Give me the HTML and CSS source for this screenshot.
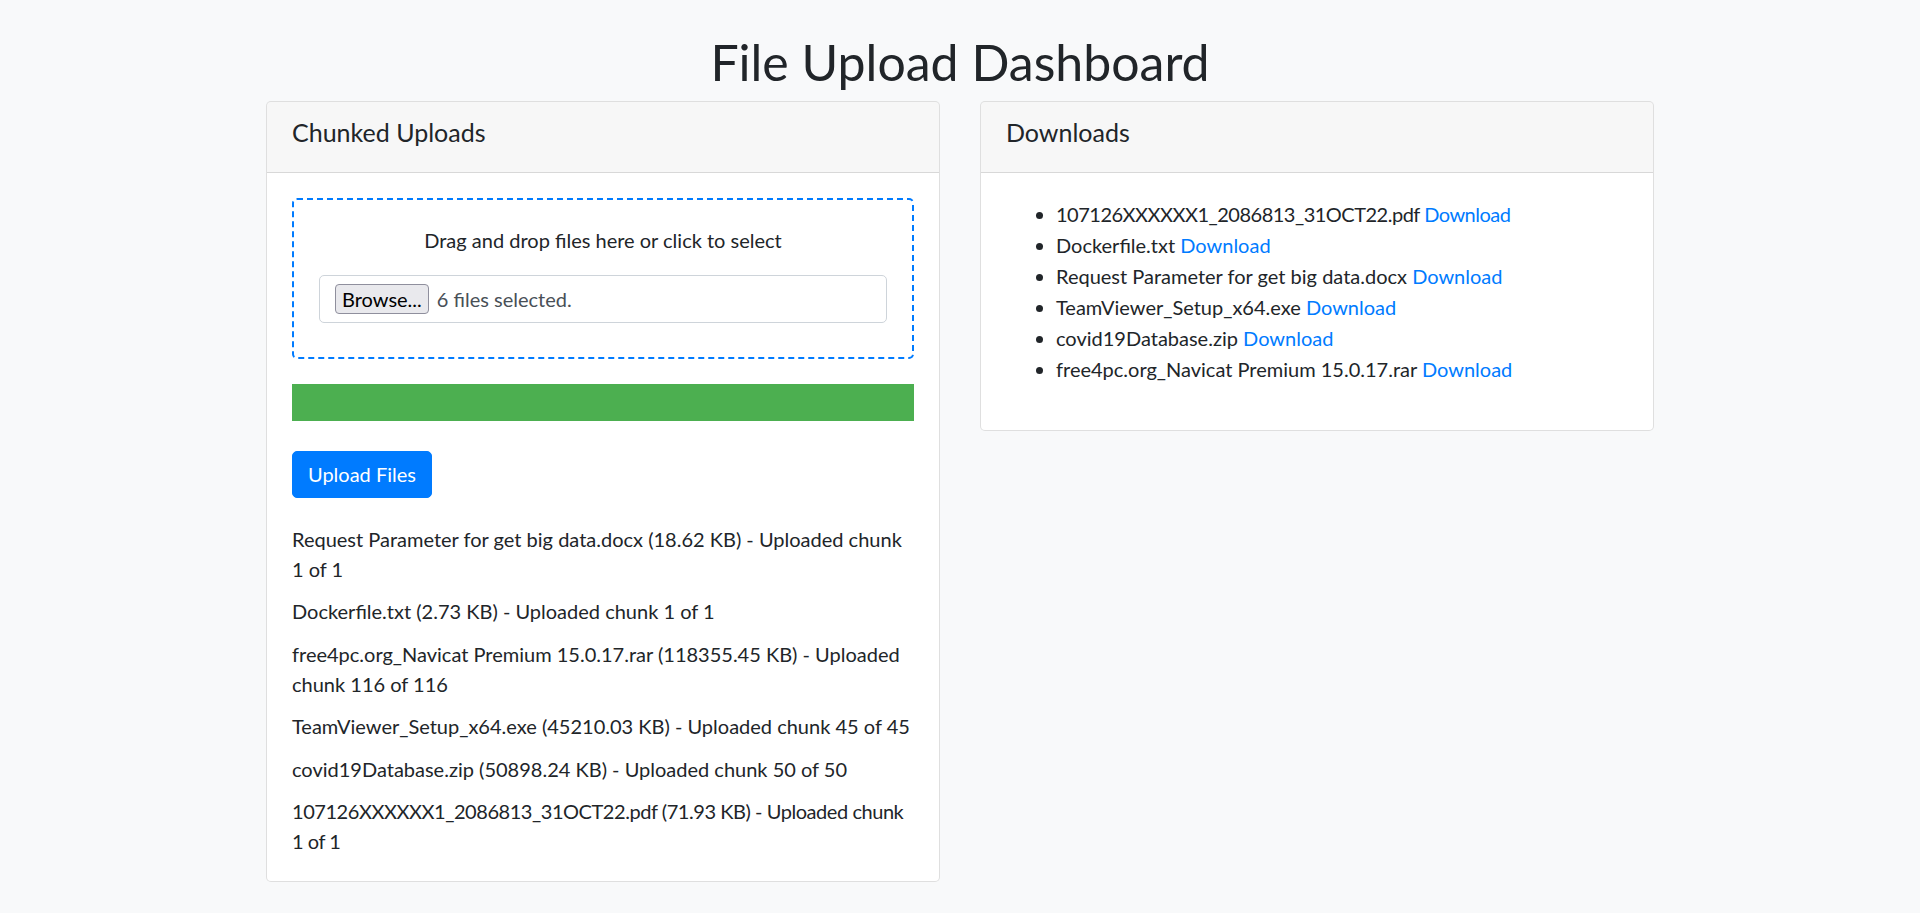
FILE: index.html
```html
<!DOCTYPE html>
<html lang="en">
<head>
<meta charset="utf-8">
<title>File Upload Dashboard</title>
<link rel="stylesheet" href="styles.css">
</head>
<body>
<div class="container">
  <h1 class="page-title">File Upload Dashboard</h1>
  <div class="row">
    <section class="card">
      <div class="card-header"><h5 class="card-title">Chunked Uploads</h5></div>
      <div class="card-body">
        <div class="dropzone">
          <p class="drop-text">Drag and drop files here or click to select</p>
          <div class="file-input">
            <button class="browse-btn" type="button">Browse...</button>
            <span class="file-label">6 files selected.</span>
          </div>
        </div>
        <div class="progress"><div class="progress-bar" style="width:100%"></div></div>
        <button class="btn-primary" type="button">Upload Files</button>
        <div class="upload-log">
          <p class="log-entry">Request Parameter for get big data.docx (18.62 KB) - Uploaded chunk 1 of 1</p>
          <p class="log-entry">Dockerfile.txt (2.73 KB) - Uploaded chunk 1 of 1</p>
          <p class="log-entry">free4pc.org_Navicat Premium 15.0.17.rar (118355.45 KB) - Uploaded chunk 116 of 116</p>
          <p class="log-entry">TeamViewer_Setup_x64.exe (45210.03 KB) - Uploaded chunk 45 of 45</p>
          <p class="log-entry">covid19Database.zip (50898.24 KB) - Uploaded chunk 50 of 50</p>
          <p class="log-entry log-tight">107126XXXXXX1_2086813_31OCT22.pdf (71.93 KB) - Uploaded chunk 1 of 1</p>
        </div>
      </div>
    </section>
    <section class="card">
      <div class="card-header"><h5 class="card-title">Downloads</h5></div>
      <div class="card-body">
        <ul class="download-list">
          <li class="item-tight">107126XXXXXX1_2086813_31OCT22.pdf <a href="#">Download</a></li>
          <li>Dockerfile.txt <a href="#">Download</a></li>
          <li>Request Parameter for get big data.docx <a href="#">Download</a></li>
          <li>TeamViewer_Setup_x64.exe <a href="#">Download</a></li>
          <li>covid19Database.zip <a href="#">Download</a></li>
          <li>free4pc.org_Navicat Premium 15.0.17.rar <a href="#">Download</a></li>
        </ul>
      </div>
    </section>
  </div>
</div>
</body>
</html>
```
FILE: styles.css
```css
html, body {
  margin: 0;
  padding: 0;
}
body {
  background: #f8f9fa;
  color: #212529;
  font-family: Lato, "Noto Sans", sans-serif;
  font-size: 20px;
  line-height: 30px;
}
.container {
  width: 1388px;
  margin: 0 auto;
  padding-top: 32px;
}
.page-title {
  margin: 0 0 9px;
  text-align: center;
  font-size: 50px;
  line-height: 60px;
  font-weight: 400;
}
.row {
  display: flex;
  gap: 40px;
  align-items: flex-start;
}
.card {
  flex: 1 1 0;
  min-width: 0;
  background: #fff;
  border: 1px solid rgba(0, 0, 0, 0.125);
  border-radius: 5px;
  overflow: hidden;
}
.card-header {
  padding: 15px 25px;
  background: rgba(0, 0, 0, 0.03);
  border-bottom: 1px solid rgba(0, 0, 0, 0.125);
}
.card-title {
  margin: 0 0 10px;
  font-size: 25px;
  line-height: 30px;
  font-weight: 400;
}
.card-body {
  padding: 25px;
}
.dropzone {
  border: 2px dashed #007bff;
  border-radius: 5px;
  padding: 25px 25px 24px;
  text-align: center;
}
.drop-text {
  margin: 0 0 20px;
}
.file-input {
  display: flex;
  align-items: center;
  gap: 8px;
  height: 47.5px;
  box-sizing: border-box;
  padding: 0 15px;
  margin-bottom: 10px;
  border: 1px solid #ced4da;
  border-radius: 5px;
  background: #fff;
  text-align: left;
}
.browse-btn {
  height: 30px;
  padding: 0 6px;
  font-family: Lato, "Noto Sans", sans-serif;
  font-size: 20px;
  color: #000;
  background: #e9e9ed;
  border: 1px solid #8f8f9d;
  border-radius: 4px;
}
.file-label {
  color: #495057;
}
.progress {
  margin-top: 25px;
  height: 37px;
  background: #e9ecef;
}
.progress-bar {
  height: 100%;
  background: #4caf50;
}
.btn-primary {
  display: block;
  margin-top: 30px;
  height: 47px;
  padding: 0 15px;
  font-family: Lato, "Noto Sans", sans-serif;
  font-size: 20px;
  line-height: 30px;
  color: #fff;
  background: #007bff;
  border: 1px solid #007bff;
  border-radius: 5px;
}
.upload-log {
  margin-top: 26px;
  display: flex;
  flex-direction: column;
  gap: 12.5px;
}
.log-entry {
  margin: 0;
}
.log-tight {
  letter-spacing: -0.45px;
}
.download-list {
  margin: 0 0 20px;
  padding: 1px 0 0 50px;
}
.download-list li {
  line-height: 31px;
}
.download-list .item-tight {
  letter-spacing: -0.5px;
}
.download-list a {
  color: #007bff;
  text-decoration: none;
}
```
